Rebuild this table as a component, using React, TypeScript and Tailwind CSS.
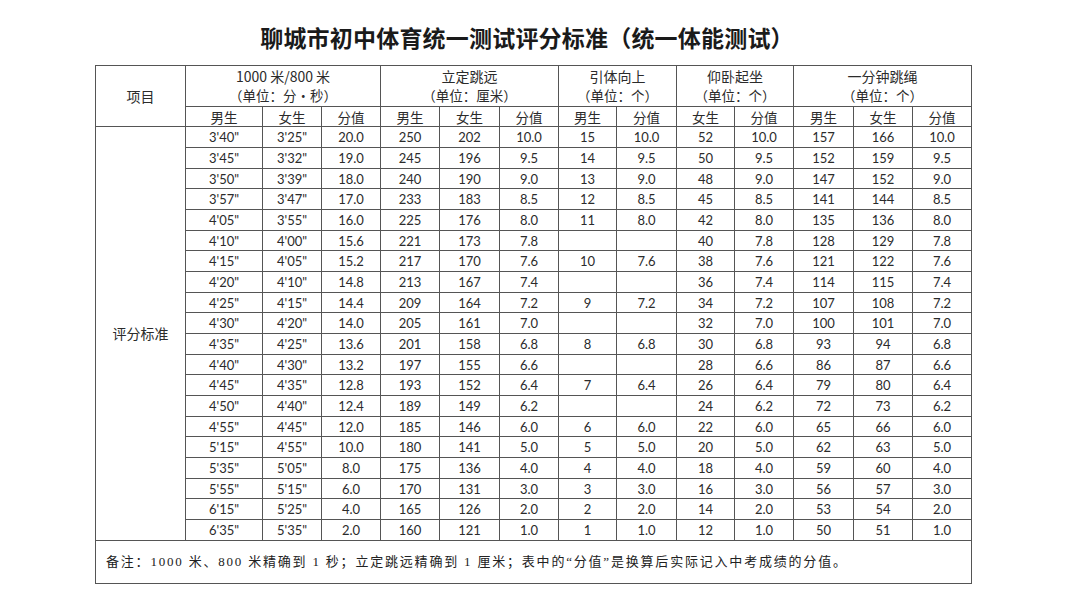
import React from "react";

const COLS = [90, 77, 59, 59, 59, 60, 59, 58, 60, 58, 59, 60, 59, 59];

const GROUPS = [
  { title: "1000 米/800 米", unit: "（单位：分•秒）", span: 3 },
  { title: "立定跳远", unit: "（单位：厘米）", span: 3 },
  { title: "引体向上", unit: "（单位：个）", span: 2 },
  { title: "仰卧起坐", unit: "（单位：个）", span: 2 },
  { title: "一分钟跳绳", unit: "（单位：个）", span: 3 },
];

const SUB = ["男生", "女生", "分值", "男生", "女生", "分值", "男生", "分值", "女生", "分值", "男生", "女生", "分值"];

const ROWS: string[][] = [
  ["3'40\"", "3'25\"", "20.0", "250", "202", "10.0", "15", "10.0", "52", "10.0", "157", "166", "10.0"],
  ["3'45\"", "3'32\"", "19.0", "245", "196", "9.5", "14", "9.5", "50", "9.5", "152", "159", "9.5"],
  ["3'50\"", "3'39\"", "18.0", "240", "190", "9.0", "13", "9.0", "48", "9.0", "147", "152", "9.0"],
  ["3'57\"", "3'47\"", "17.0", "233", "183", "8.5", "12", "8.5", "45", "8.5", "141", "144", "8.5"],
  ["4'05\"", "3'55\"", "16.0", "225", "176", "8.0", "11", "8.0", "42", "8.0", "135", "136", "8.0"],
  ["4'10\"", "4'00\"", "15.6", "221", "173", "7.8", "", "", "40", "7.8", "128", "129", "7.8"],
  ["4'15\"", "4'05\"", "15.2", "217", "170", "7.6", "10", "7.6", "38", "7.6", "121", "122", "7.6"],
  ["4'20\"", "4'10\"", "14.8", "213", "167", "7.4", "", "", "36", "7.4", "114", "115", "7.4"],
  ["4'25\"", "4'15\"", "14.4", "209", "164", "7.2", "9", "7.2", "34", "7.2", "107", "108", "7.2"],
  ["4'30\"", "4'20\"", "14.0", "205", "161", "7.0", "", "", "32", "7.0", "100", "101", "7.0"],
  ["4'35\"", "4'25\"", "13.6", "201", "158", "6.8", "8", "6.8", "30", "6.8", "93", "94", "6.8"],
  ["4'40\"", "4'30\"", "13.2", "197", "155", "6.6", "", "", "28", "6.6", "86", "87", "6.6"],
  ["4'45\"", "4'35\"", "12.8", "193", "152", "6.4", "7", "6.4", "26", "6.4", "79", "80", "6.4"],
  ["4'50\"", "4'40\"", "12.4", "189", "149", "6.2", "", "", "24", "6.2", "72", "73", "6.2"],
  ["4'55\"", "4'45\"", "12.0", "185", "146", "6.0", "6", "6.0", "22", "6.0", "65", "66", "6.0"],
  ["5'15\"", "4'55\"", "10.0", "180", "141", "5.0", "5", "5.0", "20", "5.0", "62", "63", "5.0"],
  ["5'35\"", "5'05\"", "8.0", "175", "136", "4.0", "4", "4.0", "18", "4.0", "59", "60", "4.0"],
  ["5'55\"", "5'15\"", "6.0", "170", "131", "3.0", "3", "3.0", "16", "3.0", "56", "57", "3.0"],
  ["6'15\"", "5'25\"", "4.0", "165", "126", "2.0", "2", "2.0", "14", "2.0", "53", "54", "2.0"],
  ["6'35\"", "5'35\"", "2.0", "160", "121", "1.0", "1", "1.0", "12", "1.0", "50", "51", "1.0"],
];

const cjk = "font-['Noto_Sans_CJK_SC',sans-serif]";
const num = "font-['Lato','Noto_Sans_CJK_SC',sans-serif]";

export default function App() {
  return (
    <div className="min-h-[613px] w-[1080px] bg-white text-[#2b2b2b]">
      <div className="ml-[95px] w-[876px] pt-[25px]">
        <h1 className="pr-[12px] text-center font-['Liberation_Serif','Noto_Sans_CJK_SC',serif] text-[23px] font-bold leading-[30px] tracking-[0.2px] text-[#1a1a1a]">
          聊城市初中体育统一测试评分标准（统一体能测试）
        </h1>
        <table className="mt-[10px] w-[876px] table-fixed border-collapse">
          <colgroup>
            {COLS.map((w, i) => (
              <col key={i} style={{ width: w }} />
            ))}
          </colgroup>
          <thead>
            <tr>
              <th rowSpan={2} className={`border border-[#555] text-[14px] font-normal ${cjk}`}>
                项目
              </th>
              {GROUPS.map((g) => (
                <th key={g.title} colSpan={g.span} className={`h-[41px] border border-[#555] p-0 font-normal leading-[19px] ${cjk}`}>
                  <div className="text-[14px]">{g.title}</div>
                  <div className="text-[13.5px]">{g.unit}</div>
                </th>
              ))}
            </tr>
            <tr>
              {SUB.map((s, i) => (
                <th key={i} className={`h-[20px] border border-[#555] p-0 text-[13.5px] font-normal leading-[18px] ${cjk}`}>
                  {s}
                </th>
              ))}
            </tr>
          </thead>
          <tbody>
            {ROWS.map((row, i) => (
              <tr key={i}>
                {i === 0 ? (
                  <td rowSpan={ROWS.length} className={`border border-[#555] text-center text-[14px] ${cjk}`}>
                    评分标准
                  </td>
                ) : null}
                {row.map((v, j) => (
                  <td
                    key={j}
                    className={`${i % 3 === 2 ? "h-[20px]" : "h-[21px]"} border border-[#555] p-0 text-center text-[13px] leading-[18px] ${num}`}
                  >
                    {v}
                  </td>
                ))}
              </tr>
            ))}
            <tr>
              <td
                colSpan={14}
                className="h-[43px] border border-[#555] px-[10px] font-['Liberation_Serif','Noto_Sans_CJK_SC',serif] text-[13px] tracking-[1.8px] text-[#222]"
              >
                备注：1000 米、800 米精确到 1 秒；立定跳远精确到 1 厘米；表中的“分值”是换算后实际记入中考成绩的分值。
              </td>
            </tr>
          </tbody>
        </table>
      </div>
    </div>
  );
}
